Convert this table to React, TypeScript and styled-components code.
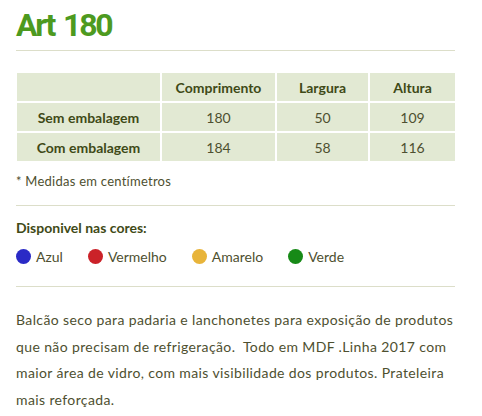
import React from "react";
import styled, { createGlobalStyle } from "styled-components";

const Global = createGlobalStyle`
  html, body { margin: 0; padding: 0; background: #fff; }
  body { font-family: Lato, "Liberation Sans", sans-serif; color: #4e5030; }
`;

const Page = styled.div`
  width: 439px;
  padding: 0 0 0 16px;
`;

const Title = styled.h1`
  margin: 0;
  padding-top: 6px;
  height: 38px;
  font-family: Roboto, "DejaVu Sans Condensed", sans-serif;
  font-weight: 700;
  font-size: 32px;
  letter-spacing: -2.2px;
  word-spacing: 3px;
  line-height: 38px;
  color: #4d9a1f;
`;

const Rule = styled.hr<{ $top: number; $bottom: number }>`
  border: 0;
  border-top: 1px solid #dcdec9;
  margin: ${(p) => p.$top}px 0 ${(p) => p.$bottom}px 0;
`;

const Table = styled.table`
  border-collapse: collapse;
  background: #e2e9d3;
  margin-left: 1px;
  width: 438px;
`;

const Cell = styled.td<{ $head?: boolean; $w?: number }>`
  height: 28px;
  border: 2px solid #fff;
  border-top: ${(p) => (p.$head ? "0" : "2px solid #fff")};
  text-align: center;
  font-size: 14px;
  font-weight: ${(p) => (p.$head ? 700 : 400)};
  color: ${(p) => (p.$head ? "#3f4a17" : "#4e5030")};
  padding: 0;
  width: ${(p) => (p.$w ? `${p.$w}px` : "auto")};
  &:first-child { border-left: 0; }
  &:last-child { border-right: 0; }
`;

const Row = styled.tr`
  &:last-child td { border-bottom: 0; }
`;

const Note = styled.p`
  margin: 11px 0 0 0;
  font-size: 13px;
  letter-spacing: 0.25px;
  line-height: 18px;
`;

const Heading = styled.div`
  font-size: 14px;
  font-weight: 700;
  color: #3f4a17;
  line-height: 18px;
`;

const Colors = styled.div`
  display: flex;
  gap: 25px;
  margin-top: 10px;
  height: 18px;
  align-items: center;
`;

const ColorItem = styled.div`
  display: flex;
  align-items: center;
  gap: 5px;
  font-size: 14px;
`;

const Dot = styled.span<{ $c: string }>`
  width: 15px;
  height: 15px;
  border-radius: 50%;
  background: ${(p) => p.$c};
  display: inline-block;
`;

const Paragraph = styled.p`
  margin: 0;
  font-size: 14px;
  letter-spacing: 0.38px;
  line-height: 26.7px;
  width: 440px;
`;

const rows = [
  ["Sem embalagem", "180", "50", "109"],
  ["Com embalagem", "184", "58", "116"],
];

const colors = [
  ["Azul", "#2a2ac6"],
  ["Vermelho", "#cb2229"],
  ["Amarelo", "#e8b43a"],
  ["Verde", "#178a17"],
];

export default function App() {
  return (
    <Page>
      <Global />
      <Title>Art 180</Title>
      <Rule $top={6} $bottom={22} />
      <Table>
        <tbody>
          <Row>
            <Cell $head $w={143}></Cell>
            <Cell $head $w={113}>Comprimento</Cell>
            <Cell $head $w={91}>Largura</Cell>
            <Cell $head>Altura</Cell>
          </Row>
          {rows.map((r) => (
            <Row key={r[0]}>
              <Cell $head>{r[0]}</Cell>
              <Cell>{r[1]}</Cell>
              <Cell>{r[2]}</Cell>
              <Cell>{r[3]}</Cell>
            </Row>
          ))}
        </tbody>
      </Table>
      <Note>* Medidas em centímetros</Note>
      <Rule $top={15} $bottom={13} />
      <Heading>Disponivel nas cores:</Heading>
      <Colors>
        {colors.map(([n, c]) => (
          <ColorItem key={n}>
            <Dot $c={c} />
            {n}
          </ColorItem>
        ))}
      </Colors>
      <Rule $top={21} $bottom={20} />
      <Paragraph>
        Balcão seco para padaria e lanchonetes para exposição de produtos que não precisam de
        refrigeração.&nbsp; Todo em MDF .Linha 2017 com maior área de vidro, com mais
        visibilidade dos produtos. Prateleira mais reforçada.
      </Paragraph>
    </Page>
  );
}
